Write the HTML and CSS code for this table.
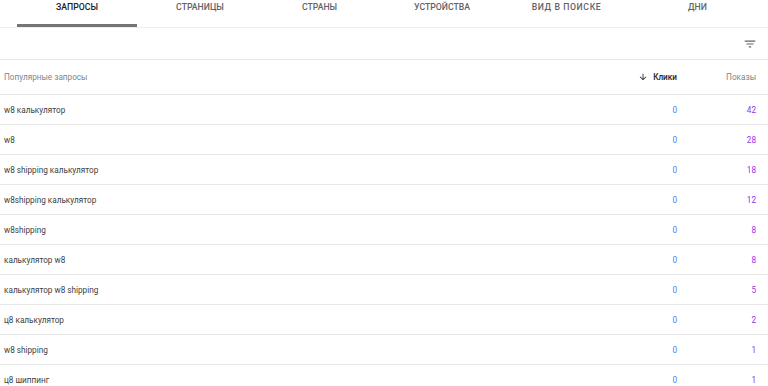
FILE: index.html
```html
<!DOCTYPE html>
<html lang="ru">
<head>
<meta charset="utf-8">
<link rel="stylesheet" href="styles.css">
</head>
<body>
<div class="tabs">
  <div class="tab active">Запросы</div>
  <div class="tab">Страницы</div>
  <div class="tab">Страны</div>
  <div class="tab">Устройства</div>
  <div class="tab wide">Вид в поиске</div>
  <div class="tab">Дни</div>
</div>
<div class="toolbar">
  <svg class="filter" viewBox="0 0 24 24" width="14" height="14"><path d="M10 18h4v-2h-4v2zM3 6v2h18V6H3zm3 7h12v-2H6v2z" fill="#5f6368"/></svg>
</div>
<div class="table">
  <div class="row head">
    <div class="q">Популярные запросы</div>
    <div class="c sorted"><svg class="arrow" viewBox="0 0 24 24" width="10" height="10"><path d="M20 12l-1.41-1.41L13 16.17V4h-2v12.17l-5.58-5.59L4 12l8 8 8-8z" fill="#202124"/></svg>Клики</div>
    <div class="i">Показы</div>
  </div>
  <div class="row"><div class="q">w8 калькулятор</div><div class="c">0</div><div class="i">42</div></div>
  <div class="row"><div class="q">w8</div><div class="c">0</div><div class="i">28</div></div>
  <div class="row"><div class="q">w8 shipping калькулятор</div><div class="c">0</div><div class="i">18</div></div>
  <div class="row"><div class="q">w8shipping калькулятор</div><div class="c">0</div><div class="i">12</div></div>
  <div class="row"><div class="q">w8shipping</div><div class="c">0</div><div class="i">8</div></div>
  <div class="row"><div class="q">калькулятор w8</div><div class="c">0</div><div class="i">8</div></div>
  <div class="row"><div class="q">калькулятор w8 shipping</div><div class="c">0</div><div class="i">5</div></div>
  <div class="row"><div class="q">ц8 калькулятор</div><div class="c">0</div><div class="i">2</div></div>
  <div class="row"><div class="q">w8 shipping</div><div class="c">0</div><div class="i">1</div></div>
  <div class="row"><div class="q">ц8 шиппинг</div><div class="c">0</div><div class="i">1</div></div>
</div>
</body>
</html>
```
FILE: styles.css
```css
html, body {
  margin: 0;
  padding: 0;
  background: #fff;
  font-family: Roboto, "Liberation Sans", sans-serif;
  overflow: hidden;
}
.tabs {
  display: grid;
  grid-template-columns: 120px 126px 113px 132px 117px 145px;
  height: 27px;
  padding-left: 17px;
  border-bottom: 1px solid #eeeeee;
}
.tab {
  position: relative;
  padding-top: 2px;
  text-align: center;
  white-space: nowrap;
  font-size: 8.7px;
  font-weight: 500;
  text-transform: uppercase;
  color: #5f6368;
  line-height: 11px;
}
.tab.wide {
  letter-spacing: 0.6px;
}
.tab.active {
  color: #202124;
}
.tab.active::after {
  content: "";
  position: absolute;
  left: 0;
  right: 0;
  bottom: 0;
  height: 3px;
  background: #757575;
}
.toolbar {
  height: 31px;
  display: flex;
  align-items: center;
  justify-content: flex-end;
  padding-right: 11px;
  border-bottom: 1px solid #e8e8e8;
}
.filter {
  display: block;
  margin-top: 1px;
}
.row {
  display: flex;
  align-items: center;
  height: 29px;
  border-bottom: 1px solid #e8e8e8;
  font-size: 8.2px;
  color: #3c4043;
  padding: 0 12px 0 4px;
}
.row.head {
  height: 34px;
  color: #80868b;
}
.q {
  flex: 1;
}
.c {
  width: 60px;
  text-align: right;
  color: #4285f4;
}
.i {
  width: 79px;
  text-align: right;
  color: #9334e6;
}
.head .c, .head .i {
  color: #80868b;
}
.head .sorted {
  color: #202124;
  font-weight: 500;
  display: flex;
  align-items: center;
  justify-content: flex-end;
}
.arrow {
  margin-right: 5px;
}
```
